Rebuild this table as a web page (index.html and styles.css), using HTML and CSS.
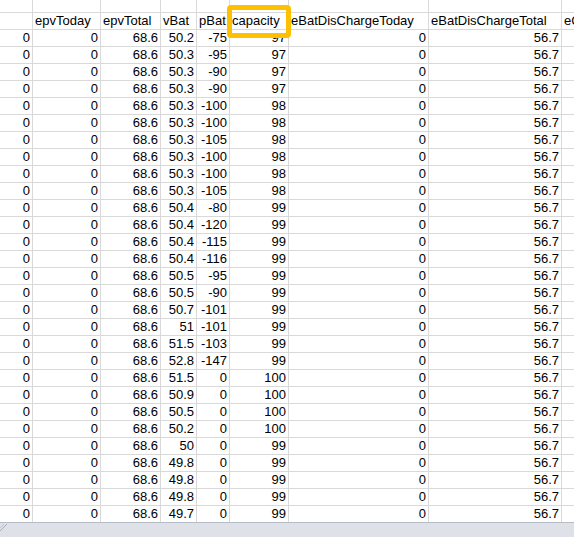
FILE: index.html
```html
<!DOCTYPE html>
<html>
<head>
<meta charset="utf-8">
<link rel="stylesheet" href="styles.css">
</head>
<body>
<div class="sheet">
  <table class="grid">
    <colgroup>
      <col class="c-a"><col class="c-b"><col class="c-c"><col class="c-d"><col class="c-e"><col class="c-f"><col class="c-g"><col class="c-h"><col class="c-i">
    </colgroup>
    <tbody id="body">
      <tr class="top"><td></td><td></td><td></td><td></td><td></td><td></td><td></td><td></td><td></td></tr>
      <tr class="head"><td></td><td>epvToday</td><td>epvTotal</td><td>vBat</td><td>pBat</td><td>capacity</td><td>eBatDisChargeToday</td><td>eBatDisChargeTotal</td><td>eChargeToday</td></tr>
    </tbody>
  </table>
  <div class="highlight"></div>
  <div class="statusbar">
    <svg class="grip" width="8" height="10" viewBox="0 0 8 10"><path d="M0 8 L7 1" stroke="#a9aeb6" stroke-width="1" fill="none"/><path d="M0 5 L4 1" stroke="#c3c7cd" stroke-width="1" fill="none"/></svg>
  </div>
</div>
<script>
  var vbat = ["50.2","50.3","50.3","50.3","50.3","50.3","50.3","50.3","50.3","50.3","50.4","50.4","50.4","50.4","50.5","50.5","50.7","51","51.5","52.8","51.5","50.9","50.5","50.2","50","49.8","49.8","49.8","49.7"];
  var pbat = ["-75","-95","-90","-90","-100","-100","-105","-100","-100","-105","-80","-120","-115","-116","-95","-90","-101","-101","-103","-147","0","0","0","0","0","0","0","0","0"];
  var cap = ["97","97","97","97","98","98","98","98","98","98","99","99","99","99","99","99","99","99","99","99","100","100","100","100","99","99","99","99","99"];
  var body = document.getElementById("body");
  for (var i = 0; i < vbat.length; i++) {
    var tr = document.createElement("tr");
    tr.className = "data";
    var vals = ["0","0","68.6",vbat[i],pbat[i],cap[i],"0","56.7",""];
    for (var j = 0; j < vals.length; j++) {
      var td = document.createElement("td");
      td.textContent = vals[j];
      tr.appendChild(td);
    }
    body.appendChild(tr);
  }
</script>
</body>
</html>
```
FILE: styles.css
```css
html, body {
  margin: 0;
  padding: 0;
  background: #ffffff;
}
.sheet {
  position: relative;
  width: 574px;
  height: 537px;
  overflow: hidden;
  font-family: "Liberation Sans", Arial, sans-serif;
  font-size: 13px;
  color: #000000;
}
.grid {
  border-collapse: separate;
  border-spacing: 0;
  table-layout: fixed;
  width: 601px;
}
.c-a { width: 33px; }
.c-b { width: 68px; }
.c-c { width: 60px; }
.c-d { width: 36px; }
.c-e { width: 33px; }
.c-f { width: 59px; }
.c-g { width: 140px; }
.c-h { width: 133px; }
.c-i { width: 39px; }
.grid td {
  padding: 0 2px;
  border-right: 1px solid #d9d9d9;
  border-bottom: 1px solid #d9d9d9;
  white-space: nowrap;
  overflow: hidden;
  line-height: 16px;
  height: 16px;
  box-sizing: content-box;
}
.grid tr.top td {
  line-height: 12px;
  height: 12px;
}
.grid tr.head td {
  text-align: left;
}
.grid tr.data td {
  text-align: right;
}
.highlight {
  position: absolute;
  left: 227px;
  top: 5px;
  width: 54px;
  height: 23px;
  border: 5px solid #ffc000;
  border-radius: 4px;
}
.statusbar {
  position: absolute;
  left: 0;
  top: 522px;
  width: 574px;
  height: 15px;
  border-top: 1px solid #b6bcc6;
  background: #dee2e8;
}
.grip {
  position: absolute;
  left: 0;
  top: 0;
}
```
